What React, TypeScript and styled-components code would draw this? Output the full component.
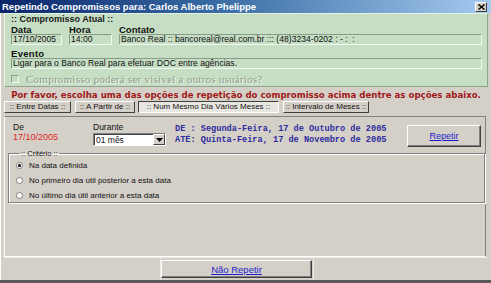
import React from "react";
import styled, { createGlobalStyle } from "styled-components";

const GlobalStyle = createGlobalStyle`
  html, body {
    margin: 0;
    padding: 0;
    background: #d4d0c8;
  }
  * {
    box-sizing: border-box;
  }
`;

const Window = styled.div`
  width: 491px;
  height: 283px;
  background: #d4d0c8;
  display: flex;
  flex-direction: column;
  font-family: "Liberation Sans", Arial, sans-serif;
  overflow: hidden;
  border-bottom: 3px solid #5a5a5a;
`;

const TitleBar = styled.div`
  height: 13px;
  display: flex;
  align-items: center;
  justify-content: space-between;
  padding: 0 4px 0 2px;
  background: linear-gradient(to right, #0a246a 0%, #3a6ea5 45%, #a6caf0 100%);
  color: #fff;
  font-weight: bold;
  font-size: 9.5px;
  white-space: nowrap;
`;

const CloseButton = styled.div`
  width: 12px;
  height: 10px;
  background: #d4d0c8;
  border: 1px solid;
  border-color: #fff #404040 #404040 #fff;
  display: flex;
  align-items: center;
  justify-content: center;
`;

const Body = styled.div`
  flex: 1;
  display: flex;
  flex-direction: column;
  padding: 0 3px 0 3px;
  border-left: 1px solid #fff;
`;

const GreenPanel = styled.div`
  height: 74px;
  background: #c6dec4;
  border: 1px solid;
  border-color: #e6f2e4 #8ea48c #8ea48c #e6f2e4;
  padding: 0 5px 0 6px;
  display: flex;
  flex-direction: column;
`;

const SectionTitle = styled.div`
  font-size: 9px;
  font-weight: bold;
  color: #1a1a1a;
  line-height: 10px;
  height: 10px;
`;

const FieldRow = styled.div`
  display: flex;
  gap: 7px;
  margin-top: 1px;
`;

const Field = styled.div<{ $w?: number }>`
  display: flex;
  flex-direction: column;
  width: ${(p) => (p.$w ? `${p.$w}px` : "auto")};
  flex: ${(p) => (p.$w ? "none" : "1")};
`;

const FieldLabel = styled.div<{ $spaced?: boolean }>`
  font-size: 9.5px;
  font-weight: bold;
  color: #111;
  line-height: 9px;
  height: 9px;
  letter-spacing: ${(p) => (p.$spaced ? "0.3px" : "0")};
`;

const FieldBox = styled.div`
  height: 11px;
  border: 1px solid;
  border-color: #8a9a88 #f4faf2 #f4faf2 #8a9a88;
  font-size: 8.6px;
  line-height: 9px;
  padding-left: 1px;
  color: #111;
  white-space: nowrap;
  overflow: hidden;
`;

const EventBlock = styled.div`
  display: flex;
  flex-direction: column;
  margin-top: 4px;
`;

const CheckRow = styled.div`
  display: flex;
  align-items: center;
  gap: 7px;
  margin-top: 5px;
`;

const CheckBox = styled.div`
  width: 8px;
  height: 8px;
  border: 1px solid;
  border-color: #8e9a8c #f2f8f0 #f2f8f0 #8e9a8c;
  background: #c6dec4;
`;

const DisabledText = styled.div`
  font-family: "Liberation Serif", "Times New Roman", serif;
  font-size: 11px;
  letter-spacing: 0.25px;
  color: #8d9a8b;
  text-shadow: 1px 1px 0 #f0f8ee;
  line-height: 10px;
`;

const Notice = styled.div`
  height: 14px;
  display: flex;
  align-items: center;
  justify-content: center;
  font-family: "DejaVu Sans", Verdana, sans-serif;
  font-weight: bold;
  font-size: 8.6px;
  color: #a01818;
  white-space: nowrap;
  padding-top: 2px;
`;

const TabRow = styled.div`
  display: flex;
  height: 12px;
`;

const Tab = styled.div<{ $w: number; $gap: number; $active?: boolean }>`
  width: ${(p) => p.$w}px;
  margin-left: ${(p) => p.$gap}px;
  height: 12px;
  border: 1px solid;
  border-color: ${(p) =>
    p.$active ? "#404040 #fff #fff #404040" : "#fff #404040 #404040 #fff"};
  background: ${(p) => (p.$active ? "#e8e6e0" : "#d4d0c8")};
  font-size: 8px;
  line-height: 10px;
  color: #111;
  text-align: center;
  white-space: nowrap;
  overflow: hidden;
`;

const OptionsPanel = styled.div`
  margin-top: 3px;
  height: 141px;
  width: 482px;
  border: 1px solid;
  border-color: #808080 #808080 #fff #fff;
  display: flex;
  flex-direction: column;
  padding: 0 2px;
`;

const TopRow = styled.div`
  display: flex;
  align-items: flex-start;
  height: 33px;
  padding-top: 6px;
`;

const DateBlock = styled.div<{ $w: number }>`
  display: flex;
  flex-direction: column;
  width: ${(p) => p.$w}px;
`;

const SmallLabel = styled.div`
  font-size: 8.5px;
  line-height: 9px;
  color: #111;
`;

const RedDate = styled.div`
  font-size: 9px;
  line-height: 10px;
  color: #e02424;
`;

const Select = styled.div`
  margin-top: 1px;
  width: 73px;
  height: 13px;
  background: #fff;
  border: 1px solid;
  border-color: #808080 #fff #fff #808080;
  box-shadow: inset 1px 1px 0 #404040;
  display: flex;
  align-items: center;
  justify-content: space-between;
  font-size: 8.5px;
  padding-left: 2px;
  color: #111;
`;

const SelectArrow = styled.div`
  width: 12px;
  height: 11px;
  background: #d4d0c8;
  border: 1px solid;
  border-color: #fff #404040 #404040 #fff;
  display: flex;
  align-items: center;
  justify-content: center;
`;

const RangeText = styled.div`
  margin-left: 8px;
  margin-top: 1px;
  font-family: "Liberation Mono", "Courier New", monospace;
  font-weight: bold;
  font-size: 8.6px;
  line-height: 11px;
  color: #2c2c9e;
  white-space: pre;
`;

const ActionButton = styled.div<{ $w: number; $h: number }>`
  width: ${(p) => p.$w}px;
  height: ${(p) => p.$h}px;
  border: 1px solid;
  border-color: #fff #404040 #404040 #fff;
  box-shadow: inset -1px -1px 0 #808080;
  display: flex;
  align-items: center;
  justify-content: center;
  background: #d4d0c8;
`;

const LinkText = styled.span<{ $size: number }>`
  font-size: ${(p) => p.$size}px;
  color: #1c1ccc;
  text-decoration: underline;
`;

const RepetirWrap = styled.div`
  margin-left: auto;
  margin-right: 2px;
  margin-top: 2px;
`;

const GroupBox = styled.fieldset`
  margin: 0 0 0 1px;
  width: 477px;
  height: 53px;
  border: 1px solid #808080;
  box-shadow: 1px 1px 0 #fff, inset 1px 1px 0 #fff;
  padding: 3px 0 0 7px;
  display: flex;
  flex-direction: column;
  gap: 5px;
  legend {
    font-size: 7.5px;
    color: #111;
    padding: 0 1px;
    margin-left: 4px;
    line-height: 7px;
  }
`;

const RadioRow = styled.div`
  display: flex;
  align-items: center;
  gap: 6px;
  font-size: 8px;
  color: #111;
  height: 10px;
`;

const Radio = styled.div<{ $on?: boolean }>`
  width: 7px;
  height: 7px;
  border-radius: 50%;
  background: #fff;
  border: 1px solid #808080;
  display: flex;
  align-items: center;
  justify-content: center;
  &::after {
    content: "";
    width: 3px;
    height: 3px;
    border-radius: 50%;
    background: ${(p) => (p.$on ? "#000" : "transparent")};
  }
`;

const Footer = styled.div`
  flex: 1;
  display: flex;
  align-items: stretch;
  border-top: 1px solid #ece9e4;
`;

const FooterCell = styled.div<{ $w?: number }>`
  width: ${(p) => (p.$w ? `${p.$w}px` : "auto")};
  flex: ${(p) => (p.$w ? "none" : "1")};
  padding-top: 2px;
  border-right: 1px solid #ece9e4;
  &:last-child {
    border-right: none;
  }
`;

const ArrowDown = () => (
  <svg width="7" height="4" viewBox="0 0 7 4">
    <path d="M0 0 H7 L3.5 4 Z" fill="#000" />
  </svg>
);

const CloseX = () => (
  <svg width="7" height="6" viewBox="0 0 7 6">
    <path d="M0.5 0.5 L6.5 5.5 M6.5 0.5 L0.5 5.5" stroke="#000" strokeWidth="1.4" />
  </svg>
);

const tabs = [
  { label: ":: Entre Datas ::", w: 67, gap: 0 },
  { label: ":: A Partir de ::", w: 60, gap: 4 },
  { label: ":: Num Mesmo Dia Vários Meses ::", w: 141, gap: 3, active: true },
  { label: ":: Intervalo de Meses ::", w: 86, gap: 4 },
];

const criterios = [
  { label: "Na data definida", on: true },
  { label: "No primeiro dia útil posterior a esta data" },
  { label: "No último dia útil anterior a esta data" },
];

const App: React.FC = () => {
  return (
    <>
      <GlobalStyle />
      <Window>
        <TitleBar>
          <span>Repetindo Compromissos para: Carlos Alberto Phelippe</span>
          <CloseButton>
            <CloseX />
          </CloseButton>
        </TitleBar>
        <Body>
          <GreenPanel>
            <SectionTitle>:: Compromisso Atual ::</SectionTitle>
            <FieldRow>
              <Field $w={51}>
                <FieldLabel>Data</FieldLabel>
                <FieldBox>17/10/2005</FieldBox>
              </Field>
              <Field $w={43}>
                <FieldLabel>Hora</FieldLabel>
                <FieldBox>14:00</FieldBox>
              </Field>
              <Field>
                <FieldLabel>Contato</FieldLabel>
                <FieldBox>
                  Banco Real :: bancoreal@real.com.br ::: (48)3234-0202 : - : &nbsp;:
                </FieldBox>
              </Field>
            </FieldRow>
            <EventBlock>
              <FieldLabel $spaced>Evento</FieldLabel>
              <FieldBox>Ligar para o Banco Real para efetuar DOC entre agências.</FieldBox>
            </EventBlock>
            <CheckRow>
              <CheckBox />
              <DisabledText>Compromisso poderá ser visível a outros usuários?</DisabledText>
            </CheckRow>
          </GreenPanel>

          <Notice>
            Por favor, escolha uma das opções de repetição do compromisso acima dentre as opções abaixo.
          </Notice>

          <TabRow>
            {tabs.map((t) => (
              <Tab key={t.label} $w={t.w} $gap={t.gap} $active={t.active}>
                {t.label}
              </Tab>
            ))}
          </TabRow>

          <OptionsPanel>
            <TopRow>
              <DateBlock $w={86}>
                <SmallLabel style={{ marginLeft: 6 }}>De</SmallLabel>
                <RedDate style={{ marginLeft: 6 }}>17/10/2005</RedDate>
              </DateBlock>
              <DateBlock $w={74}>
                <SmallLabel>Durante</SmallLabel>
                <Select>
                  01 mês
                  <SelectArrow>
                    <ArrowDown />
                  </SelectArrow>
                </Select>
              </DateBlock>
              <RangeText>
                {"DE : Segunda-Feira, 17 de Outubro de 2005\nATÉ: Quinta-Feira, 17 de Novembro de 2005"}
              </RangeText>
              <RepetirWrap>
                <ActionButton $w={74} $h={22}>
                  <LinkText $size={9}>Repetir</LinkText>
                </ActionButton>
              </RepetirWrap>
            </TopRow>
            <GroupBox>
              <legend>:: Critério ::</legend>
              {criterios.map((c) => (
                <RadioRow key={c.label}>
                  <Radio $on={c.on} />
                  {c.label}
                </RadioRow>
              ))}
            </GroupBox>
          </OptionsPanel>

          <Footer>
            <FooterCell $w={157} />
            <FooterCell $w={153}>
              <ActionButton $w={151} $h={18}>
                <LinkText $size={9.5}>Não Repetir</LinkText>
              </ActionButton>
            </FooterCell>
            <FooterCell />
          </Footer>
        </Body>
      </Window>
    </>
  );
};

export default App;
